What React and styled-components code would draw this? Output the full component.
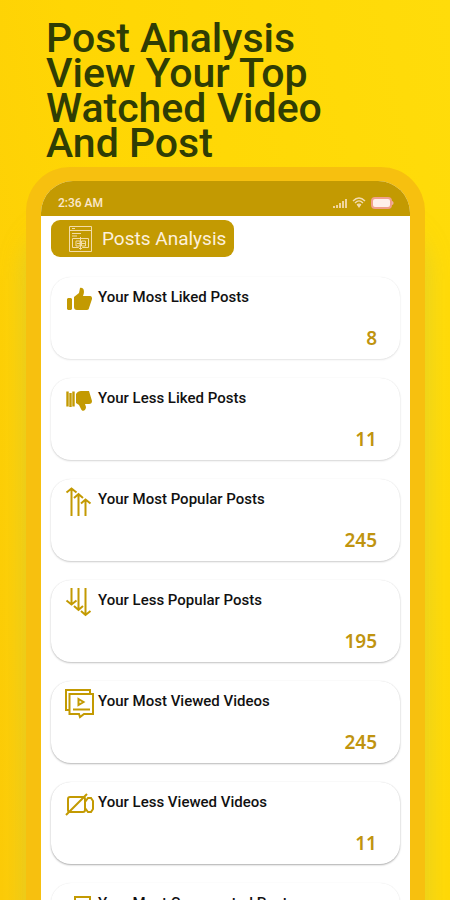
import styled, { createGlobalStyle } from "styled-components";

const GlobalStyle = createGlobalStyle`
    * {
        box-sizing: border-box;
    }
    body {
        margin: 0;
        font-family: Roboto, "Liberation Sans", sans-serif;
    }
`;

const Page = styled.div`
    height: 100vh;
    overflow: hidden;
    padding: 21px 25px 0 26px;
    background: linear-gradient(78deg, #fccb08 0%, #ffd604 40%, #ffdc0a 100%);
`;

const Headline = styled.h1`
    margin: 0 0 6px 20px;
    max-width: 300px;
    font-size: 41px;
    line-height: 35px;
    font-weight: 500;
    color: #2f3d04;
`;

const Phone = styled.main`
    padding: 14px 15px 0;
    border-radius: 44px 44px 0 0;
    background: #f7c00f;
    box-shadow: 0 60px 24px rgba(200, 200, 70, 0.6);
`;

const Screen = styled.div`
    min-height: 100vh;
    overflow: hidden;
    border-radius: 32px 32px 0 0;
    background: #fff;
`;

const StatusBar = styled.div`
    display: flex;
    align-items: center;
    justify-content: space-between;
    height: 35px;
    padding: 9px 16px 0 17px;
    background: #c39a02;
    color: #fbe8cc;
    font-size: 12px;
    font-weight: 500;
`;

const StatusIcons = styled.div`
    display: flex;
    align-items: center;
    gap: 5px;
`;

const HeaderButton = styled.button`
    display: flex;
    align-items: center;
    gap: 8px;
    height: 37px;
    margin: 4px 0 0 10px;
    padding: 0 8px 0 17px;
    border: 0;
    border-radius: 9px;
    background: #c39a02;
    color: #fdf0dc;
    font-family: inherit;
    font-size: 19px;
`;

const List = styled.ul`
    display: flex;
    flex-direction: column;
    gap: 19px;
    margin: 0;
    padding: 20px 10px;
    list-style: none;
`;

const Card = styled.li`
    display: flex;
    flex-direction: column;
    justify-content: space-between;
    height: 82px;
    padding: 6px 23px 9px 13px;
    border-radius: 20px;
    background: #fff;
    box-shadow: 0 1px 2px rgba(0, 0, 0, ${(props) => props.$shade}), 0 0 1px rgba(0, 0, 0, 0.1);
`;

const CardHead = styled.div`
    display: flex;
    align-items: center;
    gap: 3px;
    height: 32px;
`;

const CardTitle = styled.h2`
    margin: 0 0 4px;
    font-size: 15px;
    line-height: 16px;
    font-weight: 500;
    color: #111;
`;

const Count = styled.span`
    align-self: flex-end;
    font-family: "Noto Sans", sans-serif;
    font-size: 19px;
    line-height: 24px;
    font-weight: 600;
    color: #c0940f;
`;

const Icon = styled.svg`
    display: block;
    flex: none;
    fill: none;
    stroke: #c39a02;
    stroke-width: 2;
`;

function LikeIcon() {
    return (
        <Icon width="31" height="32" aria-hidden="true">
            <path d="M4 15h3l1 1v10l-1 1H4l-1-1V16z" fill="#c39a02" stroke="none" />
            <path d="M10 14l5-4 1-5c4-1 5 4 3 8h7c2 0 2 2 2 3l-3 9c0 1-1 2-2 2H13c-2 0-3-1-3-3z" fill="#c39a02" stroke="none" />
        </Icon>
    );
}

function DislikeIcon() {
    return (
        <Icon width="31" height="32" aria-hidden="true">
            <path d="M3.5 7.5v15M6.5 9v14M9.5 7.5v15" strokeWidth="2.4" />
            <path d="M12 10c1-2 3-3 5-3h8l3 10c0 2-1 3-3 3h-4l1 3c0 4-4 5-5 2l-2-4-3-2z" fill="#c39a02" stroke="none" />
        </Icon>
    );
}

function ArrowsUpIcon() {
    return (
        <Icon width="31" height="32" aria-hidden="true">
            <path d="M7.5 31V4M2.5 7.5l5-4 5 4M14.5 31V9M10 13l4.500-4 4.500 4M21.500 31V14M17 18.500l4.500-4 5 4" />
        </Icon>
    );
}

function ArrowsDownIcon() {
    return (
        <Icon width="31" height="32" aria-hidden="true">
            <path d="M7.500 2v16M2.500 14.500l5 4 5-4M14.500 2v22M10 20l4.500 4 4.500-4M21.500 2v27M17 25l4.500 4 5-4" />
        </Icon>
    );
}

function VideosIcon() {
    return (
        <Icon width="31" height="32" aria-hidden="true">
            <path d="M6 23H2V3h24v4" />
            <path d="M5.500 7h23.500v20H20l-4 3-1-3H5.500z" />
            <path d="M14.500 12l5 3-5 3zM9 22.500h17" />
        </Icon>
    );
}

function NoVideoIcon() {
    return (
        <Icon width="31" height="32" aria-hidden="true">
            <rect x="4" y="9" width="17" height="15" rx="2" />
            <path d="M21 14l3-4h3l2 3v8l-2 3h-3l-3-4M2 27L23 6" />
        </Icon>
    );
}

function ReportIcon() {
    return (
        <Icon width="26" height="28" aria-hidden="true">
            <g stroke="#f3dca8" strokeWidth="1">
                <path d="M1.5 1.5h22v25h-22zM1.5 5.5h22M4 3.5h3M4 8.500h9M4 11h5" />
                <path d="M4.500 13.500h16v9h-6l-2 2-2-2h-6zM8 16h4v5H8zM13.500 16h4v5h-4zM12.500 12v12M9 18.500h8" />
            </g>
        </Icon>
    );
}

function CommentIcon() {
    return (
        <Icon width="31" height="32" aria-hidden="true">
            <path d="M11 8h15v18H11z" />
        </Icon>
    );
}

const cards = [
    { title: "Your Most Liked Posts", count: 8, icon: LikeIcon, shade: 0.1 },
    { title: "Your Less Liked Posts", count: 11, icon: DislikeIcon, shade: 0.16 },
    { title: "Your Most Popular Posts", count: 245, icon: ArrowsUpIcon, shade: 0.2 },
    { title: "Your Less Popular Posts", count: 195, icon: ArrowsDownIcon, shade: 0.24 },
    { title: "Your Most Viewed Videos", count: 245, icon: VideosIcon, shade: 0.28 },
    { title: "Your Less Viewed Videos", count: 11, icon: NoVideoIcon, shade: 0.32 },
    { title: "Your Most Commented Posts", count: 8, icon: CommentIcon, shade: 0.1 },
];

export default function App() {
    return (
        <Page>
            <GlobalStyle />
            <Headline>Post Analysis View Your Top Watched Video And Post</Headline>
            <Phone>
                <Screen>
                    <StatusBar>
                        <span>2:36 AM</span>
                        <StatusIcons>
                            <svg width="15" height="11" aria-hidden="true">
                                <path d="M1 8h2v2H1zM4 7h2v3H4zM7 5h2v5H7zM10 3h2v7h-2zM13 1h2v9h-2z" fill="#f0d49c" />
                            </svg>
                            <svg width="14" height="12" fill="none" stroke="#f3dcb0" aria-hidden="true">
                                <path d="M1 4c4-4 8-4 12 0M3 6c3-3 5-3 8 0M5 8c1-1 3-1 4 0" strokeWidth="1.4" />
                                <path d="M5 8h4l-2 3z" fill="#f3dcb0" stroke="none" />
                            </svg>
                            <svg width="23" height="12" aria-hidden="true">
                                <rect x="1" y="1" width="19" height="10" rx="3" fill="#fff0ea" stroke="#f0a08c" strokeWidth="2" />
                                <path d="M21 4c2 0 2 4 0 4z" fill="#f0b09c" />
                            </svg>
                        </StatusIcons>
                    </StatusBar>
                    <HeaderButton type="button">
                        <ReportIcon /> Posts Analysis
                    </HeaderButton>
                    <List>
                        {cards.map(({ title, count, icon: CardIcon, shade }) => (
                            <Card key={title} $shade={shade}>
                                <CardHead>
                                    <CardIcon />
                                    <CardTitle>{title}</CardTitle>
                                </CardHead>
                                <Count>{count}</Count>
                            </Card>
                        ))}
                    </List>
                </Screen>
            </Phone>
        </Page>
    );
}
